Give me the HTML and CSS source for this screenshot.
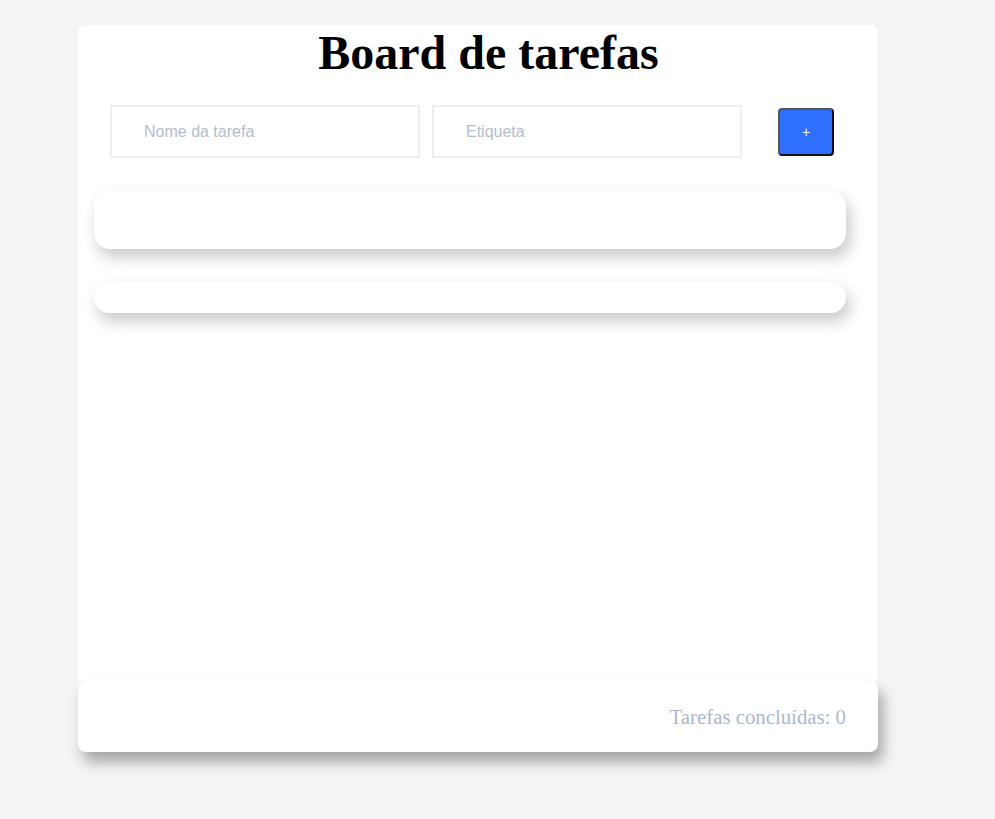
FILE: index.html
```html
<!DOCTYPE html>
<html lang="pt">
<head>
<meta charset="utf-8">
<title>Board de tarefas</title>
<link rel="stylesheet" href="styles.css">
</head>
<body>
<div class="page">
  <main class="board">
    <h1 class="title">Board de tarefas</h1>
    <form class="task-form">
      <input class="field" type="text" placeholder="Nome da tarefa">
      <input class="field" type="text" placeholder="Etiqueta">
      <button class="add-btn" type="button">+</button>
    </form>
    <section class="list list-todo"></section>
    <section class="list list-done"></section>
  </main>
  <footer class="summary">
    <span class="summary-text">Tarefas concluídas: 0</span>
  </footer>
</div>
</body>
</html>
```
FILE: styles.css
```css
html, body {
  margin: 0;
  padding: 0;
  background: #f4f4f4;
}
body {
  font-family: "Liberation Serif", "Times New Roman", serif;
  min-height: 819px;
}
.page {
  width: 800px;
  padding: 25px 0 0 78px;
  display: flex;
  flex-direction: column;
}
.board {
  background: #fff;
  border-radius: 8px 8px 0 0;
  height: 656px;
  box-sizing: border-box;
  padding: 0 32px 0 16px;
  display: flex;
  flex-direction: column;
}
.title {
  margin: 0;
  font-size: 48px;
  font-weight: bold;
  text-align: center;
  color: #000;
  line-height: 55px;
  padding-left: 37px;
}
.task-form {
  margin: 25px 0 0 16px;
  display: flex;
  align-items: center;
  gap: 12px;
  height: 53px;
}
.field {
  width: 310px;
  height: 53px;
  box-sizing: border-box;
  border: 2px solid #eeeeee;
  padding: 0 0 0 32px;
  font-family: "Liberation Sans", Arial, sans-serif;
  font-size: 16px;
  color: #333;
  outline: none;
  background: #fff;
}
.field::placeholder {
  color: #b3bdcf;
}
.add-btn {
  margin-left: 24px;
  width: 56px;
  height: 48px;
  box-sizing: border-box;
  background: #2f6fff;
  border: 2px solid #333;
  border-color: #555 #111 #111 #555;
  border-radius: 4px;
  color: #fff;
  font-family: "Liberation Sans", Arial, sans-serif;
  font-size: 14px;
  padding: 0;
}
.list {
  background: #fff;
  border-radius: 16px;
  box-shadow: 4px 8px 16px rgba(0, 0, 0, 0.22);
}
.list-todo {
  margin-top: 33px;
  height: 58px;
}
.list-done {
  margin-top: 33px;
  height: 31px;
}
.summary {
  position: relative;
  background: #fff;
  border-radius: 8px;
  height: 71px;
  box-sizing: border-box;
  padding: 0 32px;
  display: flex;
  align-items: center;
  justify-content: flex-end;
  box-shadow: 5px 10px 14px rgba(0, 0, 0, 0.32);
}
.summary-text {
  font-size: 20.8px;
  color: #adb9d0;
}
```
